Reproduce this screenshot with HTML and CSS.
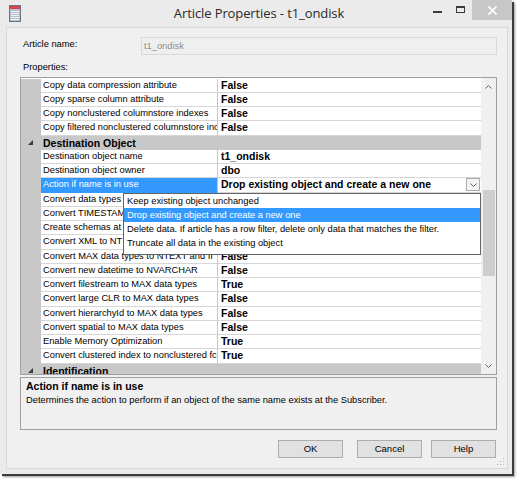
FILE: index.html
```html
<!DOCTYPE html>
<html>
<head>
<meta charset="utf-8">
<link rel="stylesheet" href="styles.css">
</head>
<body>
<div class="window">
  <div class="titlebar">
    <div class="tb-left">
      <svg class="app-icon" width="12" height="17" viewBox="0 0 12 17">
        <rect x="0.5" y="0.5" width="11" height="16" fill="#b9bfcc" stroke="#6b7385"/>
        <rect x="1" y="1" width="10" height="3" fill="#d8434d"/>
        <path d="M2 6.5h8M2 8.5h8M2 10.5h8M2 12.5h8M2 14.5h8" stroke="#eef0f5"/>
      </svg>
    </div>
    <div class="title">Article Properties - t1_ondisk</div>
    <div class="controls">
      <div class="ctl"><span class="min-bar"></span></div>
      <div class="ctl"><span class="max-box"></span></div>
      <div class="ctl close">
        <svg width="9" height="9" viewBox="0 0 9 9"><path d="M0.5 0.5L8.5 8.5M8.5 0.5L0.5 8.5" stroke="#fff" stroke-width="1.6"/></svg>
      </div>
    </div>
  </div>
  <div class="client">
    <div class="name-row">
      <div class="lbl">Article name:</div>
      <div class="textbox">t1_ondisk</div>
    </div>
    <div class="props-label">Properties:</div>
    <div class="grid">
      <div class="rows">
        <div class="row"><div class="gut"></div><div class="nm">Copy data compression attribute</div><div class="vl">False</div></div>
        <div class="row"><div class="gut"></div><div class="nm">Copy sparse column attribute</div><div class="vl">False</div></div>
        <div class="row"><div class="gut"></div><div class="nm">Copy nonclustered columnstore indexes</div><div class="vl">False</div></div>
        <div class="row"><div class="gut"></div><div class="nm">Copy filtered nonclustered columnstore inc</div><div class="vl">False</div></div>
        <div class="row cat"><div class="gut"><svg class="tri" width="5" height="5" viewBox="0 0 5 5"><polygon points="5,0 5,5 0,5" fill="#3a3a3a"/></svg></div><div class="nm">Destination Object</div></div>
        <div class="row"><div class="gut"></div><div class="nm">Destination object name</div><div class="vl">t1_ondisk</div></div>
        <div class="row"><div class="gut"></div><div class="nm">Destination object owner</div><div class="vl">dbo</div></div>
        <div class="row sel"><div class="gut"></div><div class="nm">Action if name is in use</div><div class="vl"><span class="vtext">Drop existing object and create a new one</span><span class="ddbtn"><svg width="7" height="4" viewBox="0 0 7 4"><polyline points="0.5,0.5 3.5,3.5 6.5,0.5" fill="none" stroke="#606060"/></svg></span></div></div>
        <div class="row"><div class="gut"></div><div class="nm short">Convert data types</div><div class="vl"></div></div>
        <div class="row"><div class="gut"></div><div class="nm short">Convert TIMESTAM</div><div class="vl"></div></div>
        <div class="row"><div class="gut"></div><div class="nm short">Create schemas at</div><div class="vl"></div></div>
        <div class="row"><div class="gut"></div><div class="nm short">Convert XML to NT</div><div class="vl"></div></div>
        <div class="row"><div class="gut"></div><div class="nm">Convert MAX data types to NTEXT and II</div><div class="vl">False</div></div>
        <div class="row"><div class="gut"></div><div class="nm">Convert new datetime to NVARCHAR</div><div class="vl">False</div></div>
        <div class="row"><div class="gut"></div><div class="nm">Convert filestream to MAX data types</div><div class="vl">True</div></div>
        <div class="row"><div class="gut"></div><div class="nm">Convert large CLR to MAX data types</div><div class="vl">False</div></div>
        <div class="row"><div class="gut"></div><div class="nm">Convert hierarchyId to MAX data types</div><div class="vl">False</div></div>
        <div class="row"><div class="gut"></div><div class="nm">Convert spatial to MAX data types</div><div class="vl">False</div></div>
        <div class="row"><div class="gut"></div><div class="nm">Enable Memory Optimization</div><div class="vl">True</div></div>
        <div class="row"><div class="gut"></div><div class="nm">Convert clustered index to nonclustered fc</div><div class="vl">True</div></div>
        <div class="row cat"><div class="gut"><svg class="tri" width="5" height="5" viewBox="0 0 5 5"><polygon points="5,0 5,5 0,5" fill="#3a3a3a"/></svg></div><div class="nm">Identification</div></div>

        <div class="popup">
          <div class="opt">Keep existing object unchanged</div>
          <div class="opt hl">Drop existing object and create a new one</div>
          <div class="opt">Delete data. If article has a row filter, delete only data that matches the filter.</div>
          <div class="opt">Truncate all data in the existing object</div>
        </div>
      </div>
      <div class="vscroll">
        <div class="sb-btn"><svg width="7" height="4" viewBox="0 0 7 4"><polyline points="0.5,3.5 3.5,0.5 6.5,3.5" fill="none" stroke="#606060"/></svg></div>
        <div class="thumb"></div>
        <div class="sb-btn down"><svg width="7" height="4" viewBox="0 0 7 4"><polyline points="0.5,0.5 3.5,3.5 6.5,0.5" fill="none" stroke="#606060"/></svg></div>
      </div>
    </div>
    <div class="desc">
      <div class="desc-title">Action if name is in use</div>
      <div class="desc-text">Determines the action to perform if an object of the same name exists at the Subscriber.</div>
    </div>
    <div class="buttons">
      <div class="btn">OK</div>
      <div class="btn cancel">Cancel</div>
      <div class="btn help">Help</div>
    </div>
    <svg class="grip" width="8" height="8" viewBox="0 0 8 8">
      <rect x="6" y="0" width="1" height="1" fill="#b8b8b8"/>
      <rect x="3" y="3" width="1" height="1" fill="#b8b8b8"/>
      <rect x="6" y="3" width="1" height="1" fill="#b8b8b8"/>
      <rect x="0" y="6" width="1" height="1" fill="#b8b8b8"/>
      <rect x="3" y="6" width="1" height="1" fill="#b8b8b8"/>
      <rect x="6" y="6" width="1" height="1" fill="#b8b8b8"/>
    </svg>
  </div>
</div>
</body>
</html>
```
FILE: styles.css
```css
* { box-sizing: border-box; }
html, body { margin: 0; padding: 0; }
body {
  width: 520px;
  height: 480px;
  background: #ffffff;
  font-family: "Liberation Sans", Arial, sans-serif;
  font-size: 9.3px;
  color: #000;
  overflow: hidden;
}
.window {
  width: 512px;
  height: 474px;
  background: #ebebeb;
  display: flex;
  flex-direction: column;
  box-shadow: 2px 2px 0 #3c3c3c, 3px 3px 2px rgba(0,0,0,0.4);
}
.titlebar {
  height: 27px;
  display: grid;
  grid-template-columns: 1fr auto 1fr;
  align-items: start;
}
.tb-left { padding: 5px 0 0 9px; }
.app-icon { display: block; }
.title {
  font-family: "Open Sans", "Noto Sans", sans-serif;
  font-size: 13px;
  letter-spacing: -0.1px;
  line-height: 27px;
  color: #2a2a2a;
  padding-left: 6px;
}
.controls { justify-self: end; display: flex; }
.ctl {
  width: 23px;
  height: 20px;
  display: flex;
  align-items: center;
  justify-content: center;
}
.min-bar { display: block; width: 9px; height: 2px; background: #3a3a3a; margin-top: 3px; }
.max-box { display: block; width: 9px; height: 7px; border: 1px solid #3a3a3a; border-top-width: 2px; margin-top: -1px; }
.ctl.close { width: 40px; background: #c7c7c7; }
.ctl.close svg { display: block; }

.client {
  flex: 1;
  margin: 0 4px 5px 6px;
  background: #f0f0f0;
  border: 1px solid #d8d8d8;
  padding: 9px 10px 0 13px;
  position: relative;
}
.name-row { display: flex; height: 18px; }
.lbl { width: 121px; padding-left: 3px; line-height: 15px; }
.textbox {
  width: 356px;
  height: 18px;
  border: 1px solid #d9d9d9;
  background: #efefef;
  color: #8d8d8d;
  padding-left: 2px;
  line-height: 16px;
}
.props-label { margin-top: 5px; line-height: 14px; padding-left: 3px; }

.grid {
  margin-top: 3px;
  height: 298px;
  border: 1px solid #a0a0a0;
  background: #fff;
  display: flex;
}
.rows {
  position: relative;
  width: 460px;
  overflow: hidden;
  padding-top: 0.5px;
}
.row { display: flex; height: 14.25px; }
.gut { width: 20px; flex: none; background: #c8c8c8; }
.nm {
  width: 177px;
  flex: none;
  border-right: 1px solid #c8c8c8;
  border-bottom: 1px solid #d6d6d6;
  padding-left: 2px;
  white-space: nowrap;
  overflow: hidden;
  line-height: 13px;
}
.vl {
  flex: 1;
  min-width: 0;
  border-bottom: 1px solid #d6d6d6;
  padding-left: 3px;
  font-weight: bold;
  font-size: 10.5px;
  line-height: 13px;
  white-space: nowrap;
  overflow: hidden;
}
.row.cat { background: #c8c8c8; }
.row.cat .gut { display: flex; align-items: center; padding-left: 7px; }
.tri { display: block; }
.row.cat .nm {
  flex: 1;
  width: auto;
  border: none;
  font-weight: bold;
  font-size: 10.5px;
  line-height: 14px;
}
.row.sel .nm { background: #3399ff; color: #fff; border-bottom-color: #3399ff; }
.row.sel .vl { display: flex; align-items: center; }
.vtext { flex: 1; overflow: hidden; }
.ddbtn {
  flex: none;
  width: 14px;
  height: 13px;
  border: 1px solid #acacac;
  background: #f4f4f4;
  margin-right: 1px;
  display: flex;
  align-items: center;
  justify-content: center;
}
.ddbtn svg { display: block; }

.popup {
  position: absolute;
  left: 102px;
  top: 114.5px;
  width: 358px;
  height: 62px;
  border: 1px solid #646464;
  background: #fff;
}
.opt { height: 14px; line-height: 14px; padding-left: 3px; white-space: nowrap; }
.opt.hl { background: #3399ff; color: #fff; }

.vscroll {
  width: 15px;
  background: #f0f0f0;
  display: flex;
  flex-direction: column;
}
.sb-btn {
  height: 17px;
  flex: none;
  display: flex;
  align-items: center;
  justify-content: center;
}
.sb-btn svg { display: block; }
.thumb { margin: 95px 1px 0 2px; height: 86px; background: #cdcdcd; flex: none; }
.sb-btn.down { margin-top: auto; }

.desc {
  margin-top: 2px;
  height: 53px;
  border: 1px solid #a0a0a0;
  background: #f0f0f0;
  padding: 1px 0 0 5px;
}
.desc-title { font-weight: bold; font-size: 10.5px; line-height: 14px; }
.desc-text { line-height: 14px; }

.buttons {
  display: flex;
  justify-content: flex-end;
  margin-top: 10px;
  padding-right: 1px;
}
.btn {
  width: 65px;
  height: 18px;
  border: 1px solid #adadad;
  background: #e1e1e1;
  text-align: center;
  line-height: 16px;
  font-size: 9.5px;
}
.btn.cancel { margin-left: 14px; }
.btn.help { margin-left: 9px; }
.grip { position: absolute; right: 2px; bottom: 2px; }
```
